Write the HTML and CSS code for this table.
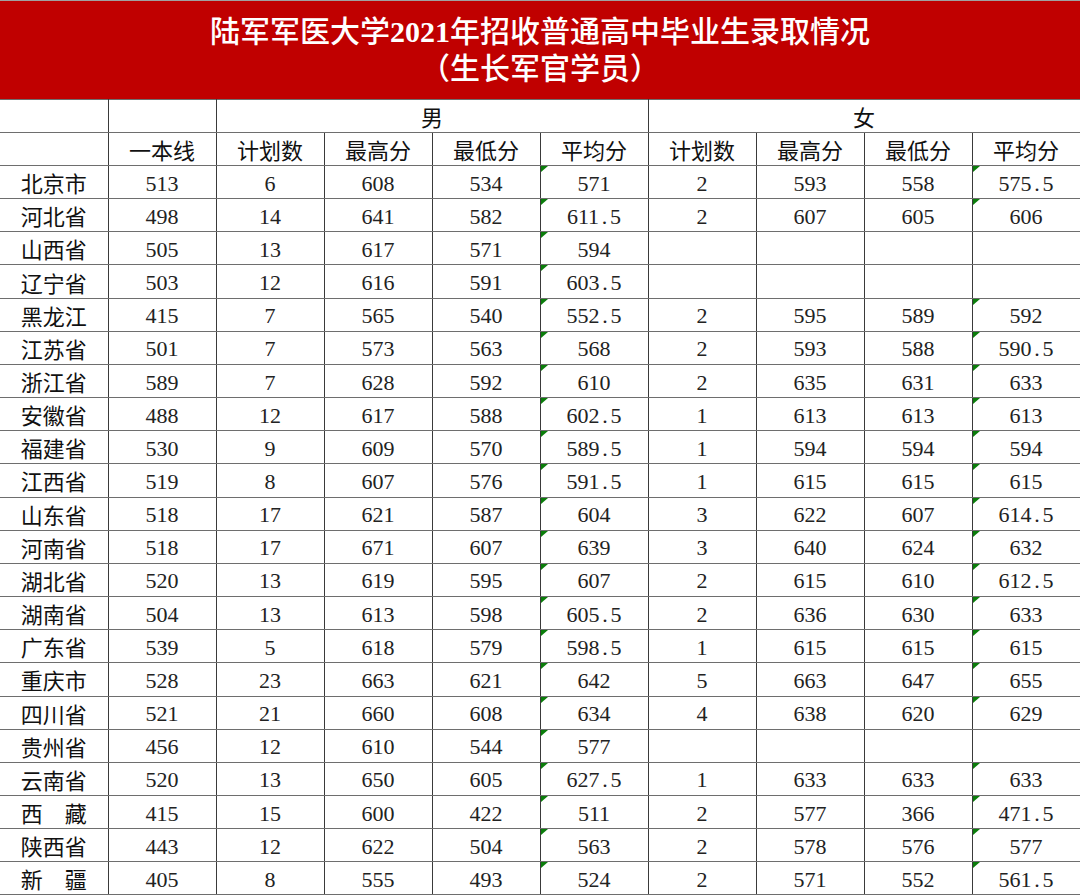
FILE: index.html
```html
<!DOCTYPE html>
<html lang="zh-CN">
<head>
<meta charset="utf-8">
<title>陆军军医大学2021年招收普通高中毕业生录取情况</title>
<link rel="stylesheet" href="styles.css">
</head>
<body>
<div class="sheet">
  <div class="banner">
    <div class="banner-line">陆军军医大学<span class="year">2021</span>年招收普通高中毕业生录取情况</div>
    <div class="banner-line">（生长军官学员）</div>
  </div>
  <table class="grid">
    <colgroup>
      <col><col><col><col><col><col><col><col><col><col>
    </colgroup>
    <thead>
      <tr class="hrow">
        <th class="first"></th><th></th><th colspan="4">男</th><th colspan="4" class="last">女</th>
      </tr>
      <tr class="hrow">
        <th class="first"></th><th>一本线</th><th>计划数</th><th>最高分</th><th>最低分</th><th>平均分</th><th>计划数</th><th>最高分</th><th>最低分</th><th class="last">平均分</th>
      </tr>
    </thead>
    <tbody>
      <tr><td class="prov first">北京市</td><td>513</td><td>6</td><td>608</td><td>534</td><td class="flag">571</td><td>2</td><td>593</td><td>558</td><td class="flag last">575<span class="dot">.</span>5</td></tr>
      <tr><td class="prov first">河北省</td><td>498</td><td>14</td><td>641</td><td>582</td><td class="flag">611<span class="dot">.</span>5</td><td>2</td><td>607</td><td>605</td><td class="flag last">606</td></tr>
      <tr><td class="prov first">山西省</td><td>505</td><td>13</td><td>617</td><td>571</td><td class="flag">594</td><td></td><td></td><td></td><td class="last"></td></tr>
      <tr><td class="prov first">辽宁省</td><td>503</td><td>12</td><td>616</td><td>591</td><td class="flag">603<span class="dot">.</span>5</td><td></td><td></td><td></td><td class="last"></td></tr>
      <tr><td class="prov first">黑龙江</td><td>415</td><td>7</td><td>565</td><td>540</td><td class="flag">552<span class="dot">.</span>5</td><td>2</td><td>595</td><td>589</td><td class="flag last">592</td></tr>
      <tr><td class="prov first">江苏省</td><td>501</td><td>7</td><td>573</td><td>563</td><td class="flag">568</td><td>2</td><td>593</td><td>588</td><td class="flag last">590<span class="dot">.</span>5</td></tr>
      <tr><td class="prov first">浙江省</td><td>589</td><td>7</td><td>628</td><td>592</td><td class="flag">610</td><td>2</td><td>635</td><td>631</td><td class="flag last">633</td></tr>
      <tr><td class="prov first">安徽省</td><td>488</td><td>12</td><td>617</td><td>588</td><td class="flag">602<span class="dot">.</span>5</td><td>1</td><td>613</td><td>613</td><td class="flag last">613</td></tr>
      <tr><td class="prov first">福建省</td><td>530</td><td>9</td><td>609</td><td>570</td><td class="flag">589<span class="dot">.</span>5</td><td>1</td><td>594</td><td>594</td><td class="flag last">594</td></tr>
      <tr><td class="prov first">江西省</td><td>519</td><td>8</td><td>607</td><td>576</td><td class="flag">591<span class="dot">.</span>5</td><td>1</td><td>615</td><td>615</td><td class="flag last">615</td></tr>
      <tr><td class="prov first">山东省</td><td>518</td><td>17</td><td>621</td><td>587</td><td class="flag">604</td><td>3</td><td>622</td><td>607</td><td class="flag last">614<span class="dot">.</span>5</td></tr>
      <tr><td class="prov first">河南省</td><td>518</td><td>17</td><td>671</td><td>607</td><td class="flag">639</td><td>3</td><td>640</td><td>624</td><td class="flag last">632</td></tr>
      <tr><td class="prov first">湖北省</td><td>520</td><td>13</td><td>619</td><td>595</td><td class="flag">607</td><td>2</td><td>615</td><td>610</td><td class="flag last">612<span class="dot">.</span>5</td></tr>
      <tr><td class="prov first">湖南省</td><td>504</td><td>13</td><td>613</td><td>598</td><td class="flag">605<span class="dot">.</span>5</td><td>2</td><td>636</td><td>630</td><td class="flag last">633</td></tr>
      <tr><td class="prov first">广东省</td><td>539</td><td>5</td><td>618</td><td>579</td><td class="flag">598<span class="dot">.</span>5</td><td>1</td><td>615</td><td>615</td><td class="flag last">615</td></tr>
      <tr><td class="prov first">重庆市</td><td>528</td><td>23</td><td>663</td><td>621</td><td class="flag">642</td><td>5</td><td>663</td><td>647</td><td class="flag last">655</td></tr>
      <tr><td class="prov first">四川省</td><td>521</td><td>21</td><td>660</td><td>608</td><td class="flag">634</td><td>4</td><td>638</td><td>620</td><td class="flag last">629</td></tr>
      <tr><td class="prov first">贵州省</td><td>456</td><td>12</td><td>610</td><td>544</td><td class="flag">577</td><td></td><td></td><td></td><td class="last"></td></tr>
      <tr><td class="prov first">云南省</td><td>520</td><td>13</td><td>650</td><td>605</td><td class="flag">627<span class="dot">.</span>5</td><td>1</td><td>633</td><td>633</td><td class="flag last">633</td></tr>
      <tr><td class="prov first">西　藏</td><td>415</td><td>15</td><td>600</td><td>422</td><td class="flag">511</td><td>2</td><td>577</td><td>366</td><td class="flag last">471<span class="dot">.</span>5</td></tr>
      <tr><td class="prov first">陕西省</td><td>443</td><td>12</td><td>622</td><td>504</td><td class="flag">563</td><td>2</td><td>578</td><td>576</td><td class="flag last">577</td></tr>
      <tr><td class="prov first">新　疆</td><td>405</td><td>8</td><td>555</td><td>493</td><td class="flag">524</td><td>2</td><td>571</td><td>552</td><td class="flag last">561<span class="dot">.</span>5</td></tr>
    </tbody>
  </table>
</div>
</body>
</html>
```
FILE: styles.css
```css
html, body {
  margin: 0;
  padding: 0;
  background: #ffffff;
}

.sheet {
  width: 1080px;
  overflow: hidden;
}

.banner {
  height: 99px;
  box-sizing: border-box;
  border-top: 1px solid #a0a0a0;
  background: #c00000;
  color: #ffffff;
  padding-top: 12px;
  text-align: center;
  font-family: "Liberation Serif", "Noto Sans CJK SC", serif;
  font-size: 30px;
  font-weight: 500;
  line-height: 37px;
}

.banner-line {
  white-space: nowrap;
}

.year {
  font-weight: 700;
}

.grid {
  width: 1080px;
  border-collapse: collapse;
  table-layout: fixed;
}

.grid col {
  width: 108px;
}

.grid th,
.grid td {
  padding: 0;
  text-align: center;
  vertical-align: middle;
  border-left: 1px solid #3a3a3a;
  border-right: 1px solid #3a3a3a;
  border-bottom: 1px solid #6e6e6e;
  border-top: 1px solid #6e6e6e;
}

.grid .first {
  border-left: none;
}

.grid .last {
  border-right: 1px solid #9a9a9a;
}

.hrow th {
  height: 32px;
  font-family: "Noto Sans CJK SC", "Noto Sans", sans-serif;
  font-size: 22px;
  font-weight: 400;
  color: #111111;
  line-height: 26px;
}

.grid td {
  height: 29.16px;
  padding-top: 3px;
  font-family: "Liberation Serif", "Noto Sans CJK SC", serif;
  font-size: 22px;
  color: #222222;
  line-height: 26px;
}

.grid td.prov {
  height: 32.16px;
  padding-top: 0;
  font-family: "Noto Sans CJK SC", "Noto Sans", sans-serif;
  font-size: 22px;
  color: #111111;
}

.dot {
  display: inline-block;
  width: 11px;
  text-align: center;
}

.flag {
  position: relative;
}

.flag::before {
  content: "";
  position: absolute;
  left: 0;
  top: 0;
  width: 0;
  height: 0;
  border-top: 6px solid #0b7d0b;
  border-right: 7px solid transparent;
}
```
